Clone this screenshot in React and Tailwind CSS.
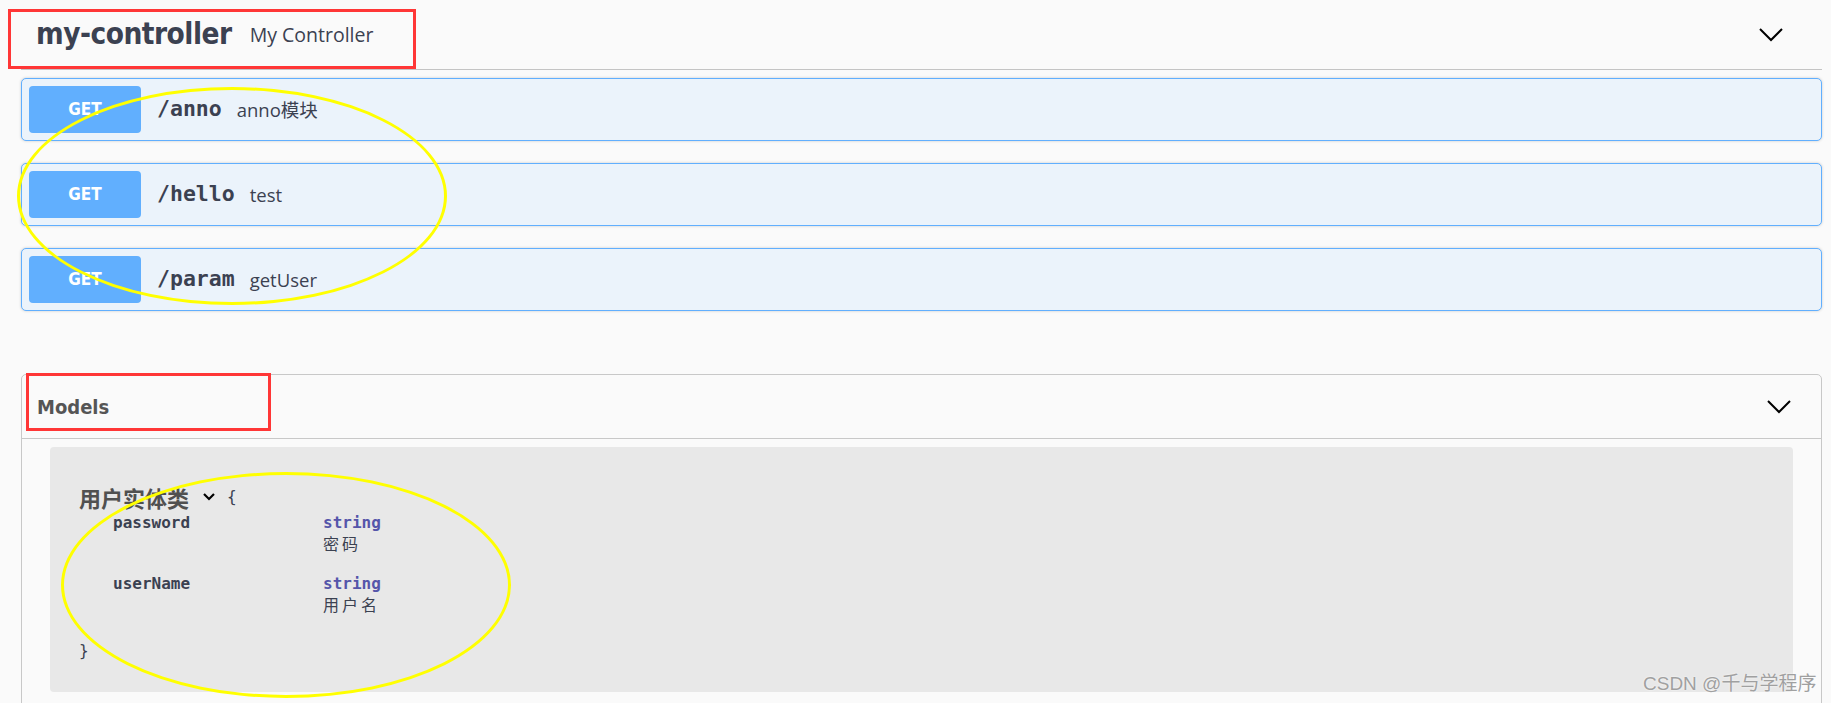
import React from "react";

const ops = [
  { method: "GET", path: "/anno", summary: "anno模块" },
  { method: "GET", path: "/hello", summary: "test" },
  { method: "GET", path: "/param", summary: "getUser" },
];

const props = [
  { name: "password", type: "string", desc: "密码" },
  { name: "userName", type: "string", desc: "用户名" },
];

const head = { fontFamily: '"DejaVu Sans Condensed", "Open Sans", sans-serif' };
const body = { fontFamily: '"Open Sans", "Noto Sans CJK SC", sans-serif' };
const mono = { fontFamily: '"DejaVu Sans Mono", "Noto Sans CJK SC", monospace' };

const Chevron = ({ className }) => (
  <svg viewBox="0 0 24 14" className={className} fill="none" stroke="currentColor" strokeWidth="2">
    <polyline points="1,1 12,12 23,1" />
  </svg>
);

const App = () => {
  return (
    <div className="relative h-[703px] overflow-hidden bg-[#fafafa] text-[#3b4151]">
      <div className="pl-[21px] pr-[9px]">
        {/* tag header */}
        <div className="flex h-[70px] items-center border-b border-[#c4c4c4]">
          <span className="pl-[15px] text-[29.5px] font-bold tracking-[-0.5px]" style={head}>
            my-controller
          </span>
          <span className="ml-[18px] text-[19.5px]" style={body}>
            My Controller
          </span>
          <Chevron className="ml-auto mr-[39px] h-[14px] w-[24px] text-black" />
        </div>

        {/* operations */}
        <div className="mt-[8px] flex flex-col gap-[22px]">
          {ops.map((op) => (
            <div
              key={op.path}
              className="flex h-[63px] items-center rounded-[5px] border border-[#61affe] bg-[#ebf3fb] px-[7px] shadow-[0_0_3px_rgba(0,0,0,0.19)]"
            >
              <div
                className="flex h-[47px] w-[112px] items-center justify-center rounded-[4px] bg-[#61affe] text-[17px] font-bold text-white"
                style={head}
              >
                {op.method}
              </div>
              <span className="ml-[16px] text-[21.5px] font-bold" style={mono}>
                {op.path}
              </span>
              <span className="ml-[15px] text-[18.5px]" style={body}>
                {op.summary}
              </span>
            </div>
          ))}
        </div>

        {/* models */}
        <div className="mt-[63px] h-[400px] rounded-[5px] border border-[#c8c8c8]">
          <div className="flex h-[64px] items-center border-b border-[#c8c8c8]">
            <span className="pl-[15px] text-[20px] font-bold text-[#555]" style={head}>
              Models
            </span>
            <Chevron className="ml-auto mr-[30px] h-[14px] w-[24px] text-black" />
          </div>
          <div className="mx-[28px] mt-[8px] h-[245px] rounded-[4px] bg-[#e8e8e8] pl-[29px] pt-[37px]">
            <div className="flex h-[26px] items-center">
              <span className="text-[22px] font-bold text-[#505050]" style={{ fontFamily: '"Noto Sans CJK SC", sans-serif' }}>
                用户实体类
              </span>
              <svg viewBox="0 0 12 8" className="ml-[14px] h-[8px] w-[12px]" fill="none" stroke="black" strokeWidth="2.2">
                <polyline points="1,1 6,6 11,1" />
              </svg>
              <span className="ml-[12px] text-[16px]" style={mono}>{"{"}</span>
            </div>
            <div className="mt-[3px] flex flex-col gap-[21px] pl-[34px]">
              {props.map((p) => (
                <div key={p.name} className="flex text-[16px] leading-[20px]" style={mono}>
                  <span className="w-[210px] font-bold">{p.name}</span>
                  <div className="flex flex-col">
                    <span className="font-bold text-[#55a]">{p.type}</span>
                    <span className="tracking-[3px]" style={{ fontFamily: '"Noto Sans CJK SC", sans-serif' }}>
                      {p.desc}
                    </span>
                  </div>
                </div>
              ))}
            </div>
            <div className="mt-[27px] text-[16px] leading-[20px]" style={mono}>
              {"}"}
            </div>
          </div>
        </div>
      </div>

      {/* annotations drawn on the screenshot */}
      <div className="absolute left-[8px] top-[9px] h-[60px] w-[408px] border-[3px] border-[#ff3636]" />
      <div className="absolute left-[26px] top-[373px] h-[58px] w-[245px] border-[3px] border-[#ff3636]" />
      <div className="absolute left-[17px] top-[87px] h-[218px] w-[430px] rounded-[50%] border-[3px] border-[#ffff00]" />
      <div className="absolute left-[61px] top-[472px] h-[226px] w-[450px] rounded-[50%] border-[3px] border-[#ffff00]" />

      <div
        className="absolute left-[1643px] top-[670px] text-[19px] text-[#a0a0a0] [text-shadow:0_0_2px_#fff]"
        style={{ fontFamily: '"Liberation Sans", "Noto Sans CJK SC", sans-serif' }}
      >
        CSDN @千与学程序
      </div>
    </div>
  );
};

export default App;
